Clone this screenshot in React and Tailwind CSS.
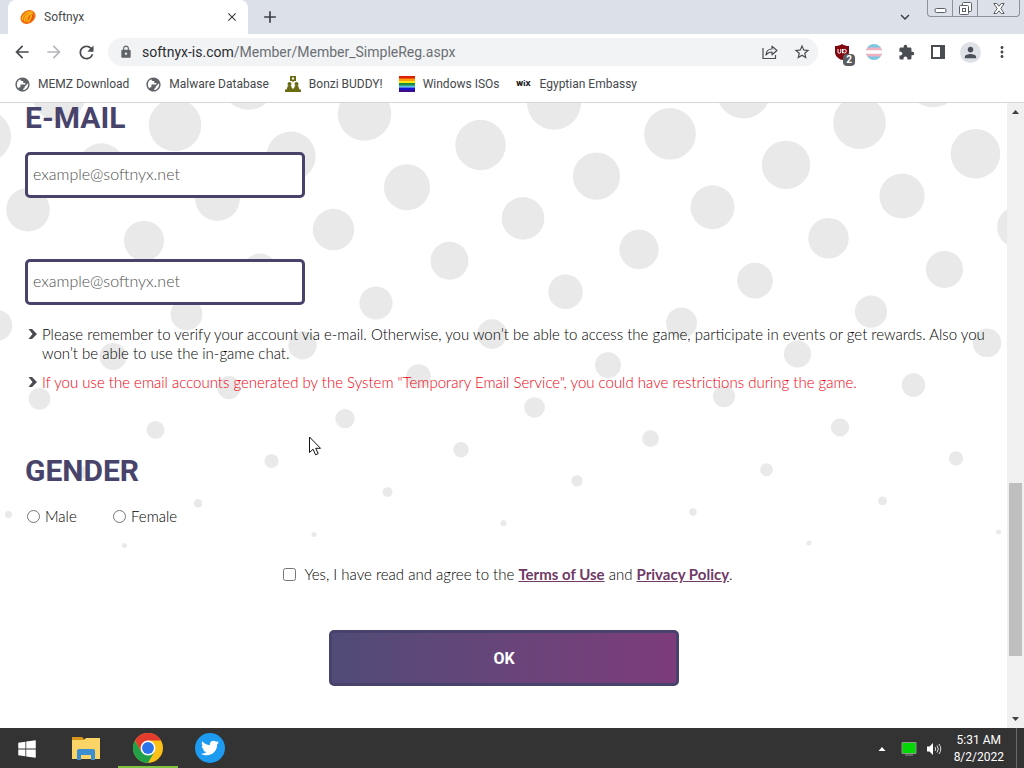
import { FaTwitter, FaWindows } from "react-icons/fa";
import {
  MdAdd,
  MdArrowBack,
  MdArrowForward,
  MdClose,
  MdExpandMore,
  MdExtension,
  MdLock,
  MdMoreVert,
  MdPerson,
  MdPublic,
  MdRefresh,
  MdStarBorder,
} from "react-icons/md";

// halftone background: a slanted lattice of dots that shrink towards the bottom
const dots = [];
for (let i = -12; i <= 20; i++) {
  for (let j = -14; j <= 14; j++) {
    const x = 480.5 + 116 * i - 73.5 * j;
    const y = 42 + 31.1 * i + 42.3 * j;
    if (y < -30 || y > 450 || x < -30 || x > 2000) continue;
    const d = Math.max(0, y - 7);
    dots.push({ x, y, r: Math.max(2.5, 27 - 0.05 * d - 0.00002 * d * d) });
  }
}

const notes = [
  {
    text: "Please remember to verify your account via e-mail. Otherwise, you won’t be able to access the game, participate in events or get rewards. Also you won’t be able to use the in-game chat.",
    color: "text-black",
  },
  {
    text: 'If you use the email accounts generated by the System "Temporary Email Service", you could have restrictions during the game.',
    color: "text-[#f00010]",
  },
];

function SoftnyxIcon() {
  return (
    <svg width="16" height="16" viewBox="0 0 16 16">
      <ellipse cx="8" cy="8" rx="8" ry="6.4" transform="rotate(-35 8 8)" fill="#f36c0a" />
      <path d="M2.5 11C1.800 6.500 6 2.500 12.500 2.800M5 12.500C3.500 8.500 7 4.500 13 4.500" fill="none" stroke="#ffc21a" strokeWidth="1.200" />
      <ellipse cx="9" cy="8.500" rx="1.800" ry="4" transform="rotate(20 9 8.500)" fill="none" stroke="#ffc21a" strokeWidth="1.200" />
      <path d="M12 5.500c1.500 2 .5 4.500-1.500 6.500" fill="none" stroke="#d8480a" />
    </svg>
  );
}

function BonziIcon() {
  return (
    <svg width="16" height="16" viewBox="0 0 16 16" fill="#6b6b14">
      <path d="M5 0h6v5H9L8 6.500 7 5H5zM7 1.500v2h2v-2z" fillRule="evenodd" />
      <circle cx="4.500" cy="8" r="2" />
      <circle cx="11.500" cy="8" r="2" />
      <path d="M1.500 13.500 3 9.500h3l1 3h2l1-3h3l1.500 4H16V16H0v-2.500z" />
    </svg>
  );
}

function RainbowIcon() {
  return (
    <svg width="16" height="16" viewBox="0 0 16 16">
      <path d="M0 0h16v3H0z" fill="#dc1e0a" />
      <path d="M0 2.500h16v3H0z" fill="#ff9d0a" />
      <path d="M0 5h16v2.500H0z" fill="#f5ea14" />
      <path d="M0 7h16v3H0z" fill="#228b3c" />
      <path d="M0 9.500h16v2H0z" fill="#4ec3e8" />
      <path d="M0 11.500h16v3H0z" fill="#1414d2" />
      <path d="M0 14h16v2H0z" fill="#3c0a8c" />
    </svg>
  );
}

function GlobeIcon() {
  return <MdPublic size={17} className="-scale-x-100 text-[#5f6368]" />;
}

const bookmarks = [
  { label: "MEMZ Download", icon: <GlobeIcon /> },
  { label: "Malware Database", icon: <GlobeIcon /> },
  { label: "Bonzi BUDDY!", icon: <BonziIcon /> },
  { label: "Windows ISOs", icon: <RainbowIcon /> },
  { label: "Egyptian Embassy", icon: <span className="text-[8px] font-black text-[#222]">WiX</span> },
];

function ToolButton({ label, children }) {
  return (
    <button aria-label={label} className="grid h-7 w-8 shrink-0 place-items-center text-[#4a4d51]">
      {children}
    </button>
  );
}

function TabStrip() {
  return (
    <div className="flex h-[34px] bg-[#dce0e8] pl-2">
      <div className="flex w-60 items-center rounded-t-lg bg-white pr-2 pl-3 text-[#45484c]">
        <SoftnyxIcon />
        <span className="ml-2 flex-1 text-[12px]">Softnyx</span>
        <button aria-label="Close tab" className="grid h-4 w-4 place-items-center text-[#3c4043]">
          <MdClose size={14} />
        </button>
      </div>
      <button aria-label="New tab" className="ml-3 grid w-5 place-items-center text-[#3c4043]">
        <MdAdd size={20} />
      </button>
      <div className="flex-1" />
      <button aria-label="Search tabs" className="mr-3 grid w-5 place-items-center text-[#3c4043]">
        <MdExpandMore size={18} />
      </button>
      <div className="mr-1 flex h-[17px] w-[93px] divide-x divide-[#8d9199] rounded-b border border-t-0 border-[#8d9199] text-[#5b5f66]">
        <button aria-label="Minimize" className="grid w-[25px] place-items-center">
          <svg width="13" height="14" viewBox="0 0 13 14" fill="none" stroke="currentColor">
            <rect x="1" y="7.500" width="11" height="4" rx="1.500" fill="#fff" />
          </svg>
        </button>
        <button aria-label="Restore" className="grid w-[25px] place-items-center">
          <svg width="13" height="13" viewBox="0 0 13 13" fill="#fff" stroke="currentColor">
            <rect x="3.500" y=".5" width="9" height="9" rx="1" />
            <rect x=".5" y="3.500" width="9" height="9" rx="1" />
            <rect x="3.500" y="6.500" width="3" height="3" />
          </svg>
        </button>
        <button aria-label="Close" className="grid flex-1 place-items-center">
          <svg width="12" height="11" viewBox="0 0 12 11" fill="#fff" stroke="currentColor">
            <path d="M.8.500h3L6 3.200 8.200.500h3L7.800 5.500l3.400 5h-3L6 7.800 3.800 10.500h-3l3.400-5z" />
          </svg>
        </button>
      </div>
    </div>
  );
}

function Toolbar() {
  return (
    <div className="flex h-9 items-center bg-white px-[6px]">
      <ToolButton label="Back"><MdArrowBack size={20} /></ToolButton>
      <ToolButton label="Forward"><MdArrowForward size={20} className="text-[#b5b7ba]" /></ToolButton>
      <ToolButton label="Reload"><MdRefresh size={21} /></ToolButton>
      <div className="mr-2 ml-[6px] flex h-7 flex-1 items-center rounded-full bg-[#f1f3f4] pl-[11px]">
        <MdLock size={14} className="text-[#5f6368]" />
        <div className="ml-[9px] flex-1 text-[14px] text-[#6b6f74]">
          <span className="text-[#2b2d30]">softnyx-is.com</span>/Member/Member_SimpleReg.aspx
        </div>
        <ToolButton label="Share">
          <svg width="16" height="16" viewBox="0 0 16 16" fill="none" stroke="currentColor" strokeWidth="1.200">
            <path d="M1 4v10.500h12.500V11" />
            <path d="M4 11c.3-4 2.500-6 6-6V2.200l5 4.300-5 4.300V8C7.500 8 5.500 9 4 11z" strokeLinejoin="round" />
          </svg>
        </ToolButton>
        <ToolButton label="Bookmark this tab"><MdStarBorder size={18} /></ToolButton>
      </div>
      <ToolButton label="uBlock Origin">
        <span className="relative">
          <svg width="16" height="16" viewBox="0 0 16 16">
            <path d="M8 0c2 1.500 4.500 2 7 2v6c0 4-3 6.500-7 8-4-1.500-7-4-7-8V2c2.500 0 5-.5 7-2z" fill="#800610" />
            <path d="M4 5v3q0 1.300 1.300 1.300T6.800 8V5M8.500 5v4.300" fill="none" stroke="#fff" />
            <circle cx="10.500" cy="7.200" r="1.800" fill="none" stroke="#fff" />
          </svg>
          <span className="absolute top-[10px] left-[9px] h-3 w-3 rounded-sm bg-[#5a5d61] text-center text-[10px] leading-3 font-bold text-white">2</span>
        </span>
      </ToolButton>
      <ToolButton label="Pride flag">
        <svg width="16" height="16" viewBox="0 0 16 16">
          <clipPath id="flag"><circle cx="8" cy="8" r="8" /></clipPath>
          <g clipPath="url(#flag)">
            <path d="M0 0h16v16H0z" fill="#7cc8e4" />
            <path d="M0 3.500h16v9H0z" fill="#f2afc0" />
            <path d="M0 6.200h16v3.600H0z" fill="#fff" />
          </g>
        </svg>
      </ToolButton>
      <ToolButton label="Extensions"><MdExtension size={17} /></ToolButton>
      <ToolButton label="Side panel">
        <svg width="14" height="14" viewBox="0 0 14 14" fill="currentColor">
          <path d="M0 0h14v14H0zM2 2v10h7V2z" fillRule="evenodd" />
        </svg>
      </ToolButton>
      <ToolButton label="Profile">
        <span className="grid h-[21px] w-[21px] place-items-center rounded-full bg-[#dee1e6] text-[#4a4f5a]">
          <MdPerson size={17} />
        </span>
      </ToolButton>
      <ToolButton label="Menu"><MdMoreVert size={18} /></ToolButton>
    </div>
  );
}

function Bookmarks() {
  return (
    <nav className="flex h-[33px] items-center gap-4 border-b border-[#d5d7da] bg-white pb-1 pl-[14px]">
      {bookmarks.map((b) => (
        <a key={b.label} href="#" className="flex items-center gap-2 text-[12px] text-[#45484c]">
          <span className="grid h-4 w-4 place-items-center">{b.icon}</span>
          {b.label}
        </a>
      ))}
    </nav>
  );
}

function Heading({ children, className = "" }) {
  return (
    <h2 className={`font-['Roboto',sans-serif] text-[30px] leading-[30px] font-bold text-[#48436a] ${className}`}>
      {children}
    </h2>
  );
}

function EmailInput({ label, className }) {
  return (
    <input
      type="email"
      aria-label={label}
      placeholder="example@softnyx.net"
      className={`block h-[46px] w-[280px] rounded-[5px] border-3 border-[#48436a] bg-white px-[5px] pb-[3px] text-[16px] placeholder:text-[#505050] ${className}`}
    />
  );
}

function SignUpForm() {
  return (
    <form className="relative flex-1 pr-4 pb-[42px] pl-[25px] font-['Lato',sans-serif] text-[15px] leading-[19px] font-light text-black">
      <Heading>E-MAIL</Heading>
      <EmailInput label="E-mail" className="mt-[19px]" />
      <EmailInput label="Confirm e-mail" className="mt-[61px]" />
      <ul className="mt-5 flex flex-col gap-[10px]">
        {notes.map((n) => (
          <li key={n.text} className={`flex ${n.color}`}>
            <svg width="17" height="19" viewBox="0 0 17 19" className="shrink-0">
              <path d="M3.500 4h3.500l5 5-5 5H3.500l4-5z" fill="#4a4a52" />
            </svg>
            {n.text}
          </li>
        ))}
      </ul>

      <Heading className="mt-16">GENDER</Heading>
      <div className="mt-5 flex h-5 items-center pl-[2px]">
        <label className="flex w-[86px] items-center gap-[5px]">
          <input type="radio" name="gender" className="m-0 h-[13px] w-[13px]" />
          Male
        </label>
        <label className="flex items-center gap-[5px]">
          <input type="radio" name="gender" className="m-0 h-[13px] w-[13px]" />
          Female
        </label>
      </div>

      <div className="mt-[38px] flex h-5 items-center justify-center">
        <input id="agree" type="checkbox" className="mr-2 h-[13px] w-[13px]" />
        <label htmlFor="agree">
          Yes, I have read and agree to the{" "}
          <a href="#" className="font-bold text-[#6f3a66] underline">Terms of Use</a> and{" "}
          <a href="#" className="font-bold text-[#6f3a66] underline">Privacy Policy</a>.
        </label>
      </div>
      <div className="mt-[46px] flex justify-center pr-2">
        <button type="button" className="h-14 w-[350px] rounded-[5px] border-3 border-[#48436a] bg-linear-to-r from-[#504b78] to-[#7d3c7c] font-['Roboto',sans-serif] text-[16px] font-bold text-white">
          OK
        </button>
      </div>
    </form>
  );
}

function Scrollbar() {
  return (
    <div className="relative flex w-[17px] flex-col items-center bg-[#f0f0f0]">
      <svg width="17" height="17" viewBox="0 0 17 17"><path d="M5 11l3.500-4 3.500 4z" fill="#404040" /></svg>
      <div className="grow-[363]" />
      <div className="w-[13px] grow-[173] bg-[#bfbfbf]" />
      <div className="grow-[55]" />
      <svg width="17" height="17" viewBox="0 0 17 17"><path d="M5 6l3.500 4L12 6z" fill="#404040" /></svg>
    </div>
  );
}

function Taskbar() {
  return (
    <footer className="flex h-10 items-stretch bg-[#333] text-white">
      <button aria-label="Start" className="grid w-[54px] place-items-center pt-[2px]"><FaWindows size={20} /></button>
      <button aria-label="File Explorer" className="ml-[1px] grid w-[62px] place-items-center">
        <svg width="28" height="24" viewBox="0 0 28 24">
          <path d="M0 1h10l3 3h-13z" fill="#d9961a" />
          <path d="M0 4h12l2-2h14v21H0z" fill="#fbd468" />
          <path d="M5 24v-9q0-2 2-2h14q2 0 2 2v9h-4v-5H9v5z" fill="#3d8ed0" />
        </svg>
      </button>
      <button aria-label="Google Chrome" className="mx-[1px] flex w-[60px] flex-col items-center justify-between border-b-2 border-[#7fc242] pt-[5px]">
        <svg width="30" height="30" viewBox="0 0 48 48">
          <circle cx="24" cy="24" r="24" fill="#fbc116" />
          <path d="M24 24 34.400 30 24 48A24 24 0 0 1 3.200 12L13.600 30z" fill="#21a04a" />
          <path d="M24 12h20.800A24 24 0 0 0 3.200 12l10.400 18z" fill="#e33b2e" />
          <circle cx="24" cy="24" r="12" fill="#fff" />
          <circle cx="24" cy="24" r="9.500" fill="#2a73e8" />
        </svg>
      </button>
      <button aria-label="Twitter" className="grid w-[62px] place-items-center">
        <span className="grid h-[30px] w-[30px] place-items-center rounded-full bg-[#1d9bf0]"><FaTwitter size={18} /></span>
      </button>
      <div className="flex-1" />
      <div className="flex items-center gap-2 pt-[2px]">
        <svg width="12" height="12" viewBox="0 0 12 12" className="mr-1"><path d="M2.500 8 6 4l3.500 4z" fill="#fff" /></svg>
        <svg width="18" height="16" viewBox="0 0 18 16">
          <path d="M2 1.500h14v11H2z" fill="#05d605" stroke="#8a9a8a" />
          <path d="M5 14h8" stroke="#8a9a8a" />
        </svg>
        <svg width="16" height="14" viewBox="0 0 16 14">
          <path d="M1 4.500h2.500L7 1v12L3.500 9.500H1z" fill="#fff" />
          <path d="M9 5q1.500 2 0 4M11 3.500q2.600 3.500 0 7M13 2q3.600 5 0 10" fill="none" stroke="#ddd" />
        </svg>
      </div>
      <div className="mx-3 flex flex-col items-center justify-center pt-[2px] text-[12px] leading-[17px]">
        <span>5:31 AM</span>
        <span>8/2/2022</span>
      </div>
      <div className="w-2 border-l border-[#6a6a6a]" />
    </footer>
  );
}

export default function App() {
  return (
    <div className="flex min-h-screen flex-col bg-white font-['Roboto',sans-serif]">
      <TabStrip />
      <Toolbar />
      <Bookmarks />
      <main className="relative flex flex-1">
        <svg className="absolute inset-0 h-full w-full overflow-hidden" aria-hidden="true">
          {dots.map((d) => (
            <circle key={`${d.x} ${d.y}`} cx={d.x} cy={d.y} r={d.r} fill="#e9e9e9" />
          ))}
        </svg>
        <SignUpForm />
        <Scrollbar />
        {/* mouse pointer */}
        <svg width="14" height="21" viewBox="0 0 14 21" className="absolute top-[333px] left-[308px]">
          <path d="M1.500 1v15.500l3.600-3.300 2.500 5.600 2.600-1.200-2.500-5.300h4.800z" fill="#fff" stroke="#111" />
        </svg>
      </main>
      <Taskbar />
    </div>
  );
}
